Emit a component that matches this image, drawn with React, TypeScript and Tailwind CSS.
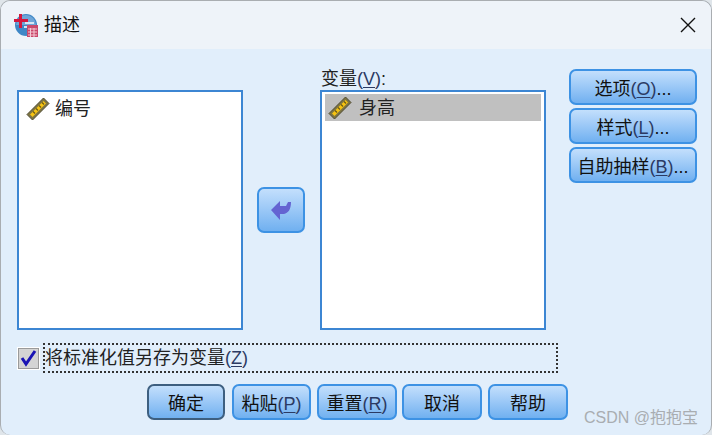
const cjk = "font-['Liberation_Sans','Noto_Sans_CJK_SC',sans-serif]"

function Mnemonic({ label, k, tail }: { label: string; k: string; tail?: string }) {
    return (
        <span>
            {label}
            <span className="text-[#2b3a63]">(<span className="underline underline-offset-2">{k}</span>)</span>
            {tail}
        </span>
    )
}

function Ruler() {
    return (
        <svg width="24" height="24" viewBox="0 0 24 24" className="shrink-0">
            <path d="M1 17.5 17.5 1 23 6.5 6.5 23Z" fill="#7d7442" stroke="#4f4a30" strokeWidth="1" />
            <path d="M4 17.5 17.5 4 20 6.5 6.5 20Z" fill="#f6c312" />
            <path d="M7 14.5l2 2M10 11.5l2 2M13 8.5l2 2M16 5.5l2 2" stroke="#6b5a14" strokeWidth="1.2" />
        </svg>
    )
}

function DialogIcon() {
    return (
        <svg width="24" height="24" viewBox="0 0 24 24">
            <circle cx="12" cy="12" r="11" fill="#3f87c6" />
            <path d="M2 12a10 10 0 0 1 20 0Z" fill="#6fa6d8" />
            <path d="M10 13h8v2h-8zM11 9h9v2h-9z" fill="#d6e6f5" />
            <path d="M5 1h3v5h6v3H8v6H5V9H0V6h5Z" fill="#d3183f" />
            <path d="M13 12h11v12H13Z" fill="#c9486b" />
            <path d="M14 16h9M14 19h9M14 22h9M16.500 15v9M20 15v9" stroke="#f3c8d4" strokeWidth="1" />
        </svg>
    )
}

function SpssButton({ children, className, isDefault }: { children: React.ReactNode; className?: string; isDefault?: boolean }) {
    return (
        <button className={`flex h-[36px] items-center justify-center whitespace-nowrap rounded-[7px] border-2 bg-gradient-to-b from-[#c3dffc] to-[#70b0f0] pt-[4px] text-[18px] text-[#111] ${isDefault ? "border-[#3d5f80]" : "border-[#3d92e4]"} ${className ?? ""}`}>
            {children}
        </button>
    )
}

export default function App() {
    return (
        <div className={`h-[435px] w-[712px] overflow-hidden bg-[#dfe5ea] ${cjk}`}>
            <div className="h-full w-full overflow-hidden rounded-[10px] border border-[#a9adb1] border-b-0 bg-[#e1eefb]">
                <div className="flex h-[48px] items-center bg-[#eef3f9] pl-[13px] pr-[15px]">
                    <DialogIcon />
                    <span className="ml-[6px] text-[18px] text-[#111]">描述</span>
                    <svg width="16" height="16" viewBox="0 0 16 16" className="ml-auto" stroke="#111" strokeWidth="1.4">
                        <path d="M1 1l14 14M15 1 1 15" />
                    </svg>
                </div>

                <div className="flex pl-[16px] pt-[20px]">
                    <div className="mt-[21px] flex h-[240px] w-[226px] items-start border-2 border-[#3c86d3] bg-white pl-[7px] pt-[4px]">
                        <div className="flex h-[26px] items-center gap-[5px] text-[18px] text-[#222]">
                            <Ruler />
                            <span>编号</span>
                        </div>
                    </div>

                    <div className="flex w-[77px] justify-start pl-[14px] pt-[118px]">
                        <button className="flex h-[46px] w-[48px] items-center justify-center rounded-[7px] border-2 border-[#3d92e4] bg-gradient-to-b from-[#c3dffc] to-[#70b0f0]">
                            <svg width="22" height="20" viewBox="0 0 22 20">
                                <path d="M1 10 10 1v5h6l2-4h3c0 8-3 11-7 12h-4v6Z" fill="#6464d2" />
                            </svg>
                        </button>
                    </div>

                    <div className="flex w-[226px] flex-col">
                        <div className="h-[21px] pl-[1px] text-[18px] leading-[21px] text-[#222]">
                            <Mnemonic label="变量" k="V" tail=":" />
                        </div>
                        <div className="h-[240px] border-2 border-[#3c86d3] bg-white p-[2px]">
                            <div className="ml-[1px] flex h-[27px] w-[216px] items-center gap-[7px] bg-[#c0c0c0] pl-[3px] pt-[1px] text-[18px] text-[#222]">
                                <Ruler />
                                <span>身高</span>
                            </div>
                        </div>
                    </div>

                    <div className="ml-[23px] flex w-[128px] flex-col gap-[3px]">
                        <SpssButton><Mnemonic label="选项" k="O" tail="..." /></SpssButton>
                        <SpssButton><Mnemonic label="样式" k="L" tail="..." /></SpssButton>
                        <SpssButton><Mnemonic label="自助抽样" k="B" tail="..." /></SpssButton>
                    </div>
                </div>

                <div className="ml-[17px] mt-[13px] flex h-[30px] items-center">
                    <span className="flex h-[21px] w-[21px] items-center justify-center border border-[#9a9a9a] bg-[#d4d4d4] outline outline-1 outline-white">
                        <svg width="17" height="17" viewBox="0 0 17 17">
                            <path d="M2 8l4 6L15 1" fill="none" stroke="#1a14b4" strokeWidth="3" />
                        </svg>
                    </span>
                    <div className="ml-[4px] flex h-[30px] w-[515px] items-center border-2 border-dotted border-[#333] text-[18px] text-[#222]">
                        <Mnemonic label="将标准化值另存为变量" k="Z" />
                    </div>
                </div>

                <div className="flex items-start">
                    <div className="ml-[146px] mt-[11px] flex">
                        <SpssButton isDefault className="w-[78px]">确定</SpssButton>
                        <SpssButton className="ml-[7px] w-[79px]"><Mnemonic label="粘贴" k="P" /></SpssButton>
                        <SpssButton className="ml-[6px] w-[80px]"><Mnemonic label="重置" k="R" /></SpssButton>
                        <SpssButton className="ml-[5px] w-[80px]">取消</SpssButton>
                        <SpssButton className="ml-[6px] w-[80px]">帮助</SpssButton>
                    </div>
                    <span className="ml-[16px] mt-[33px] whitespace-nowrap text-[16px] text-[#a9adb1]">CSDN @抱抱宝</span>
                </div>
            </div>
        </div>
    )
}
